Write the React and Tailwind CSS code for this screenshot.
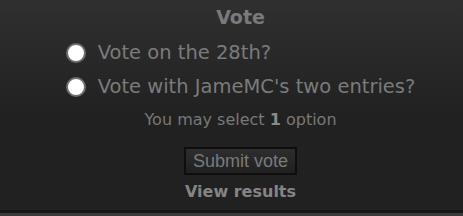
export default function App() {
  const opts = ["Vote on the 28th?", "Vote with JameMC's two entries?"];
  return (
    <div className="w-[463px] h-[216px] flex flex-col bg-[#1b1b1b]" style={{ fontFamily: '"DejaVu Sans", Verdana, sans-serif' }}>
      <div className="h-[210px] bg-gradient-to-b from-[#303030] to-[#212121] to-[55%] flex flex-col items-center pl-[18px] text-[#777777]">
        <div className="mt-[6px] text-[19px] font-bold leading-[22px] text-[#7a7a7a]">Vote</div>
        <div className="mt-[14px] flex flex-col gap-[12px]">
          {opts.map((o) => (
            <label key={o} className="flex items-center gap-[12px] h-[22px]">
              <span className="w-[20px] h-[20px] rounded-full bg-white border-2 border-[#6e6e6e]" />
              <span className="text-[19.5px] leading-[22px] text-[#7b7b7b]">{o}</span>
            </label>
          ))}
        </div>
        <div className="mt-[12px] text-[16px] leading-[20px] text-[#787878]">
          You may select <b className="text-[#8a8a8a]">1</b> option
        </div>
        <button className="mt-[17px] w-[113px] h-[28px] bg-gradient-to-b from-[#2e2e2e] to-[#202020] border-2 border-[#0e0e0e] text-[18px] text-[#7a7a7a] leading-none" style={{ fontFamily: '"Liberation Sans", Arial, sans-serif' }}>
          Submit vote
        </button>
        <div className="mt-[7px] text-[16px] font-bold leading-[20px] text-[#858585]">View results</div>
      </div>
      <div className="h-[3px] bg-[#181818]" />
      <div className="flex-1 bg-[#3a3a3a]" />
    </div>
  );
}
